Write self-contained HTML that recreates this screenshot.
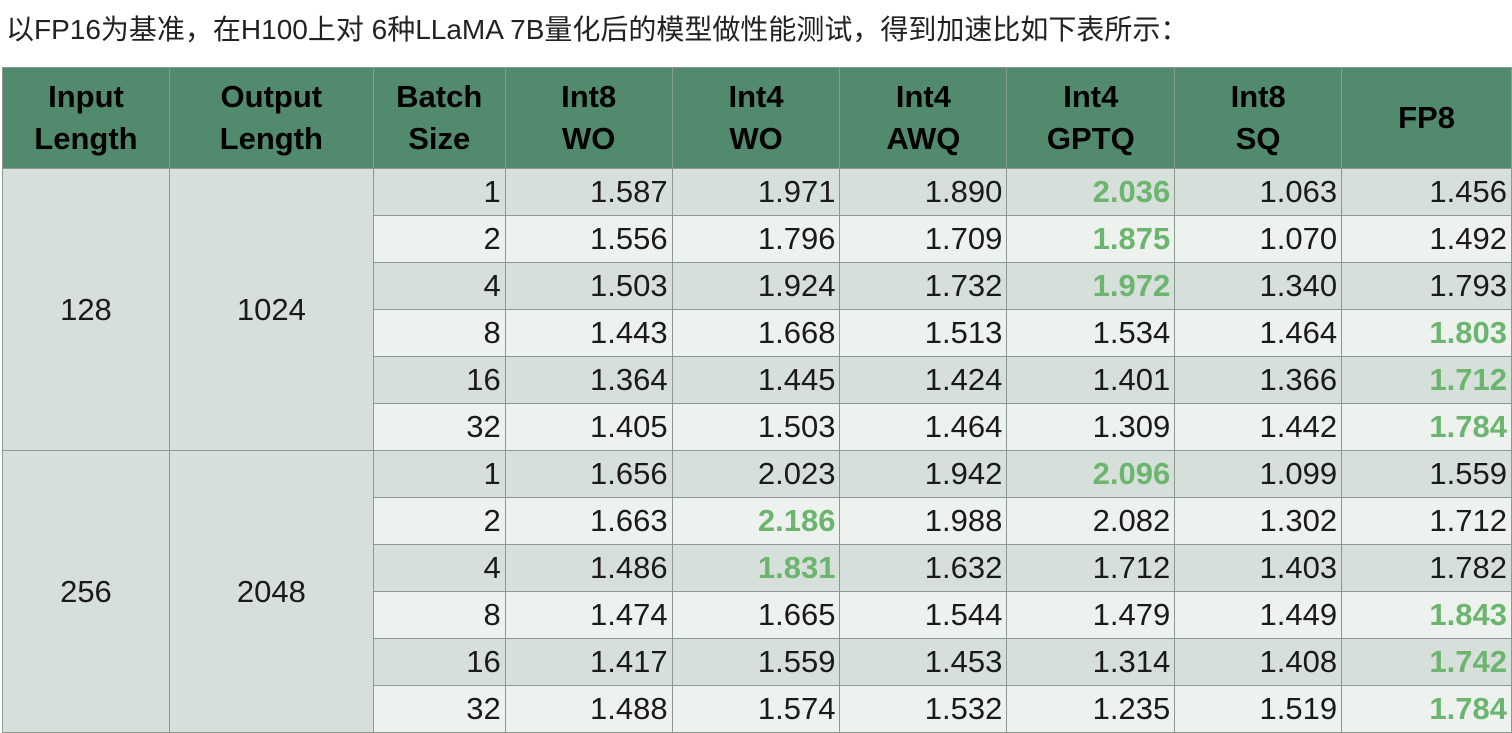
<!DOCTYPE html><html><head><meta charset="utf-8"><style>
body{margin:0;width:1512px;height:733px;background:#fff;overflow:hidden;font-family:"Liberation Sans","Noto Sans CJK SC",sans-serif}
.t{position:absolute;left:6px;top:13px;font-size:28px;line-height:34px;color:#222;white-space:nowrap}
table{position:absolute;left:2px;top:67px;border-collapse:collapse;table-layout:fixed}
td,th{border:1.5px solid #8a9a90;padding:0 4px;font-size:31px;color:#1a1a1a;height:47px;box-sizing:border-box}
th{background:#528a6e;height:101px;font-weight:bold;line-height:42px;color:#000;text-align:center}
td{text-align:right;background:#eef2ef}
tr.o td{background:#d6dfda}
td.m{background:#d6dfda;text-align:center}
.g{color:#6cb56f;font-weight:bold}
</style></head><body>
<div class="t">以FP16为基准，在H100上对 6种LLaMA 7B量化后的模型做性能测试，得到加速比如下表所示：</div>
<table>
<colgroup><col style="width:167px"><col style="width:204px"><col style="width:132px"><col style="width:167px"><col style="width:168px"><col style="width:167px"><col style="width:168px"><col style="width:167px"><col style="width:170px"></colgroup>
<tr><th>Input<br>Length</th><th>Output<br>Length</th><th>Batch<br>Size</th><th>Int8<br>WO</th><th>Int4<br>WO</th><th>Int4<br>AWQ</th><th>Int4<br>GPTQ</th><th>Int8<br>SQ</th><th>FP8</th></tr>
<tr class="o"><td rowspan="6" class="m">128</td><td rowspan="6" class="m">1024</td><td>1</td><td>1.587</td><td>1.971</td><td>1.890</td><td class="g">2.036</td><td>1.063</td><td>1.456</td></tr>
<tr><td>2</td><td>1.556</td><td>1.796</td><td>1.709</td><td class="g">1.875</td><td>1.070</td><td>1.492</td></tr>
<tr class="o"><td>4</td><td>1.503</td><td>1.924</td><td>1.732</td><td class="g">1.972</td><td>1.340</td><td>1.793</td></tr>
<tr><td>8</td><td>1.443</td><td>1.668</td><td>1.513</td><td>1.534</td><td>1.464</td><td class="g">1.803</td></tr>
<tr class="o"><td>16</td><td>1.364</td><td>1.445</td><td>1.424</td><td>1.401</td><td>1.366</td><td class="g">1.712</td></tr>
<tr><td>32</td><td>1.405</td><td>1.503</td><td>1.464</td><td>1.309</td><td>1.442</td><td class="g">1.784</td></tr>
<tr class="o"><td rowspan="6" class="m">256</td><td rowspan="6" class="m">2048</td><td>1</td><td>1.656</td><td>2.023</td><td>1.942</td><td class="g">2.096</td><td>1.099</td><td>1.559</td></tr>
<tr><td>2</td><td>1.663</td><td class="g">2.186</td><td>1.988</td><td>2.082</td><td>1.302</td><td>1.712</td></tr>
<tr class="o"><td>4</td><td>1.486</td><td class="g">1.831</td><td>1.632</td><td>1.712</td><td>1.403</td><td>1.782</td></tr>
<tr><td>8</td><td>1.474</td><td>1.665</td><td>1.544</td><td>1.479</td><td>1.449</td><td class="g">1.843</td></tr>
<tr class="o"><td>16</td><td>1.417</td><td>1.559</td><td>1.453</td><td>1.314</td><td>1.408</td><td class="g">1.742</td></tr>
<tr><td>32</td><td>1.488</td><td>1.574</td><td>1.532</td><td>1.235</td><td>1.519</td><td class="g">1.784</td></tr>
</table>
</body></html>
